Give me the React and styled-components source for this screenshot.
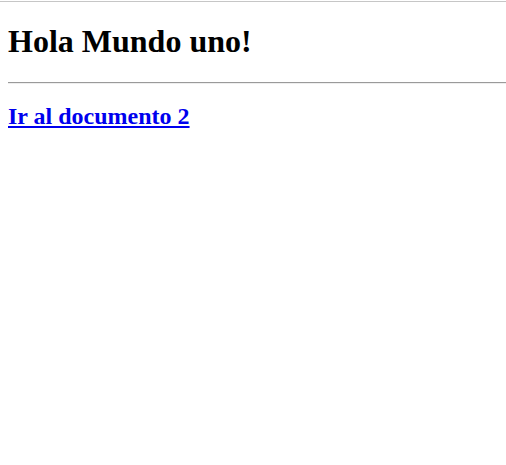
import React from "react";
import styled, { createGlobalStyle } from "styled-components";

const Global = createGlobalStyle`
  html, body { margin: 0; padding: 0; background: #fff; }
  body { font-family: "Liberation Serif", "Times New Roman", serif; }
`;

const TopRule = styled.div`
  height: 1px;
  margin-top: 1px;
  background: #c6c6c6;
`;

const Page = styled.main`
  padding: 0 0 0 8px;
`;

const Title = styled.h1`
  margin: 21px 0 0;
  font-size: 32px;
  font-weight: bold;
  line-height: 37px;
  color: #000;
`;

const Rule = styled.hr`
  margin: 22px 0 0;
  border: 0;
  border-top: 1px solid #9a9a9a;
  border-bottom: 1px solid #eeeeee;
  height: 0;
`;

const SubTitle = styled.h2`
  margin: 18px 0 0;
  font-size: 24px;
  font-weight: bold;
  line-height: 28px;
`;

const Link = styled.a`
  color: #0000ee;
  text-decoration: underline;
`;

export default function App() {
  return (
    <>
      <Global />
      <TopRule />
      <Page>
        <Title>Hola Mundo uno!</Title>
        <Rule />
        <SubTitle>
          <Link href="#">Ir al documento 2</Link>
        </SubTitle>
      </Page>
    </>
  );
}
